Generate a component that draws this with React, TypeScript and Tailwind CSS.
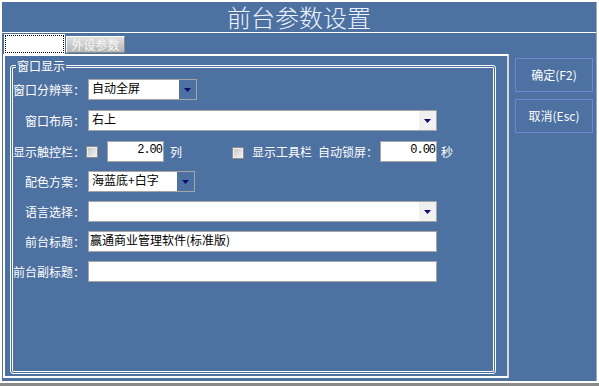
import type { ReactNode } from "react";

const CJK = "font-['Noto_Sans_CJK_SC','Liberation_Sans',sans-serif]";

function Arrow() {
  return (
    <svg width="7" height="4" viewBox="0 0 7 4">
      <path d="M0 0H7L3.5 4Z" fill="#0c0c6e" />
    </svg>
  );
}

function Label({ children }: { children: ReactNode }) {
  return <div className="w-[72px] shrink-0 text-right text-[12px] leading-[14px] text-white">{children}</div>;
}

function Combo({ value, width, focused }: { value: string; width: string; focused?: boolean }) {
  return (
    <div className={`flex h-[21px] border border-[#a5a5a5] bg-white ${width}`}>
      <div className="flex-1 pl-[3px] pt-[1px] text-[12px] leading-[14px] text-black">{value}</div>
      <div className={`flex w-[17px] items-center justify-center ${focused ? "bg-[#4d71a0]" : "bg-[#f0f0f0]"}`}>
        <Arrow />
      </div>
    </div>
  );
}

function Field({ value }: { value?: string }) {
  return (
    <div className="h-[21px] w-[349px] border border-[#a5a5a5] bg-white pl-[1px] pt-[1px] text-[12px] leading-[14px] text-black">
      {value}
    </div>
  );
}

function Num({ value }: { value: string }) {
  return (
    <div className="h-[21px] w-[57px] border border-[#a5a5a5] bg-white pr-[1px] pt-[1px] text-right font-['Liberation_Mono',monospace] text-[12px] leading-[14px] tracking-[-1px] text-black">
      {value}
    </div>
  );
}

function Check() {
  return (
    <div className="h-[12px] w-[12px] border border-[#8c8c8c] bg-linear-to-br from-[#c4c4c4] to-[#f6f6f6] shadow-[inset_0_0_0_1px_#ececec]" />
  );
}

export default function App() {
  return (
    <div className={`h-[386px] w-[599px] border-b-[3px] border-[#8a8a8a] bg-white px-[2px] pb-[2px] pt-[2px] ${CJK}`}>
      <div className="flex h-[379px] flex-col border-r border-[#a8a8a8] bg-[#4d71a0]">
        <div className="flex h-[31px] shrink-0 items-start justify-center border-b border-white pt-[1px]">
          <span className="text-[24px] font-light leading-[28px] text-[#eef3ff]">前台参数设置</span>
        </div>

        <div className="flex flex-1">
          <div className="ml-[1px] flex w-[506px] flex-col">
            <div className="flex h-[21px] items-end pl-[1px]">
              <div className="h-[20px] w-[61px] bg-white p-[1px]">
                <div className="h-full w-full border border-dotted border-black" />
              </div>
              <div className="ml-[1px] mb-[1px] flex h-[17px] w-[59px] items-center justify-center border border-t-white border-l-white border-r-[#8c8c8c] border-b-[#8c8c8c] bg-linear-to-b from-[#e2e2e2] to-[#b6b6b6] text-[12px] leading-[14px] text-[#f8f8f8]">
                外设参数
              </div>
            </div>

            <div className="h-[324px] border-2 border-t-white border-l-white border-r-[#d8d8d8] border-b-white">
              <fieldset className="ml-[5px] mt-[2px] h-[316px] w-[486px] rounded-[3px] border-[3px] border-double border-white pt-[5px]">
                <legend className="ml-[3px] px-[1px] text-[12px] leading-[16px] text-white">窗口显示</legend>

                <div className="flex items-center">
                  <Label>窗口分辨率：</Label>
                  <div className="ml-[3px]">
                    <Combo value="自动全屏" width="w-[109px]" focused />
                  </div>
                </div>

                <div className="mt-[10px] flex items-center">
                  <Label>窗口布局：</Label>
                  <div className="ml-[3px]">
                    <Combo value="右上" width="w-[349px]" />
                  </div>
                </div>

                <div className="mt-[10px] flex items-center text-[12px] leading-[14px] text-white">
                  <Label>显示触控栏：</Label>
                  <div className="ml-[1px]">
                    <Check />
                  </div>
                  <div className="ml-[9px]">
                    <Num value="2.00" />
                  </div>
                  <span className="ml-[6px]">列</span>
                  <div className="ml-[50px] mt-[3px]">
                    <Check />
                  </div>
                  <span className="ml-[8px]">显示工具栏</span>
                  <span className="ml-[6px]">自动锁屏：</span>
                  <div className="ml-[2px]">
                    <Num value="0.00" />
                  </div>
                  <span className="ml-[4px]">秒</span>
                </div>

                <div className="mt-[9px] flex items-center">
                  <Label>配色方案：</Label>
                  <div className="ml-[3px]">
                    <Combo value="海蓝底+白字" width="w-[107px]" focused />
                  </div>
                </div>

                <div className="mt-[9px] flex items-center">
                  <Label>语言选择：</Label>
                  <div className="ml-[3px]">
                    <Combo value="" width="w-[349px]" />
                  </div>
                </div>

                <div className="mt-[9px] flex items-center">
                  <Label>前台标题：</Label>
                  <div className="ml-[3px]">
                    <Field value="赢通商业管理软件(标准版)" />
                  </div>
                </div>

                <div className="mt-[9px] flex items-center">
                  <Label>前台副标题：</Label>
                  <div className="ml-[3px]">
                    <Field />
                  </div>
                </div>
              </fieldset>
            </div>
          </div>

          <div className="ml-[6px] flex w-[78px] flex-col gap-[7px] pt-[25px]">
            <div className="flex h-[34px] items-center justify-center border border-[#6d86d2] text-[12px] leading-[14px] text-white">
              确定(F2)
            </div>
            <div className="flex h-[34px] items-center justify-center border border-[#6d86d2] text-[12px] leading-[14px] text-white">
              取消(Esc)
            </div>
          </div>
        </div>
      </div>
    </div>
  );
}
